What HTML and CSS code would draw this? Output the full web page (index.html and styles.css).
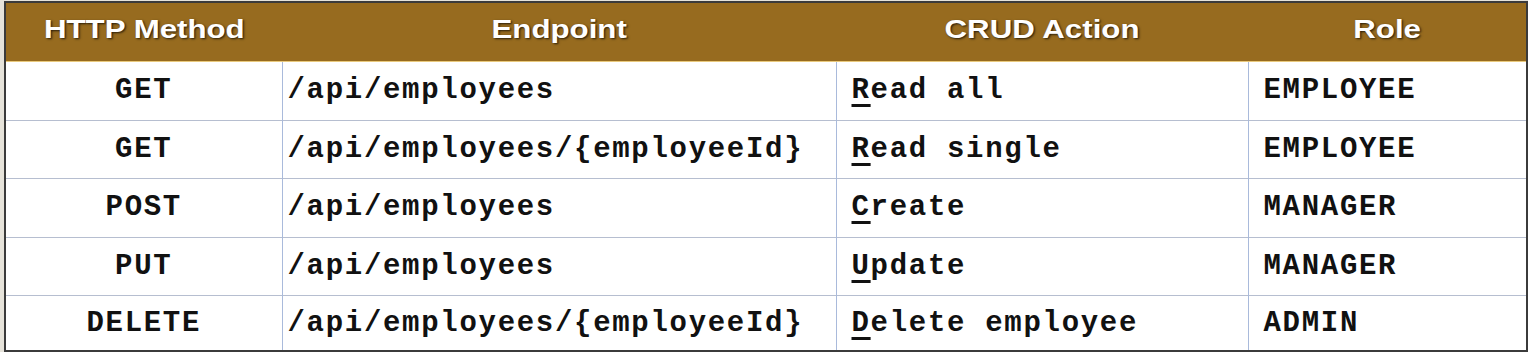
FILE: index.html
```html
<!DOCTYPE html>
<html lang="en">
<head>
    <meta charset="UTF-8">
    <title>Employee REST Endpoints</title>
    <link rel="stylesheet" href="styles.css">
</head>
<body>
    <div class="sheet">
        <table class="endpoints">
            <colgroup>
                <col class="col-method">
                <col class="col-path">
                <col class="col-action">
                <col class="col-role">
            </colgroup>
            <thead>
                <tr>
                    <th><span class="head-label">HTTP Method</span></th>
                    <th><span class="head-label">Endpoint</span></th>
                    <th><span class="head-label">CRUD Action</span></th>
                    <th><span class="head-label">Role</span></th>
                </tr>
            </thead>
            <tbody>
                <tr>
                    <td class="method">GET</td>
                    <td class="path">/api/employees</td>
                    <td class="action"><u>R</u>ead all</td>
                    <td class="role">EMPLOYEE</td>
                </tr>
                <tr>
                    <td class="method">GET</td>
                    <td class="path">/api/employees/{employeeId}</td>
                    <td class="action"><u>R</u>ead single</td>
                    <td class="role">EMPLOYEE</td>
                </tr>
                <tr>
                    <td class="method">POST</td>
                    <td class="path">/api/employees</td>
                    <td class="action"><u>C</u>reate</td>
                    <td class="role">MANAGER</td>
                </tr>
                <tr>
                    <td class="method">PUT</td>
                    <td class="path">/api/employees</td>
                    <td class="action"><u>U</u>pdate</td>
                    <td class="role">MANAGER</td>
                </tr>
                <tr>
                    <td class="method">DELETE</td>
                    <td class="path">/api/employees/{employeeId}</td>
                    <td class="action"><u>D</u>elete employee</td>
                    <td class="role">ADMIN</td>
                </tr>
            </tbody>
        </table>
    </div>
</body>
</html>
```

FILE: styles.css
```css
body {
    margin: 0;
    padding: 1px 0 0 4px;
    background-color: #e6e3da;
}

.sheet {
    border: 2px solid #3b3b3b;
    background-color: #ffffff;
    height: 347px;
    overflow: hidden;
}

.endpoints {
    width: 100%;
    border-collapse: collapse;
    table-layout: fixed;
}

.col-method { width: 276px; }
.col-path { width: 554px; }
.col-action { width: 412px; }
.col-role { width: 278px; }

th {
    height: 52px;
    padding: 0 0 6px 0;
    background-color: #976b1f;
    border-bottom: 1px solid #e9c97c;
    color: #ffffff;
    font-family: "Liberation Sans", Arial, sans-serif;
    font-weight: bold;
    font-size: 25px;
    text-align: center;
    text-shadow: 1px 1px 2px rgba(0, 0, 0, 0.75);
}

.head-label {
    display: inline-block;
    transform: scaleX(1.25);
}

td {
    height: 57.5px;
    padding: 0;
    border-top: 1px solid #b6bed0;
    border-left: 1px solid #a9badb;
    font-family: "Liberation Mono", "Courier New", monospace;
    font-weight: bold;
    font-size: 29px;
    letter-spacing: 1.7px;
    color: #111111;
}

tbody tr:first-child td {
    border-top: none;
}

tbody tr:last-child td {
    height: 54px;
}

td:first-child {
    border-left: none;
}

.method {
    text-align: center;
}

.path {
    padding-left: 5px;
}

.action {
    padding-left: 15px;
}

.role {
    padding-left: 15px;
}

.action u {
    text-decoration-thickness: 3px;
    text-underline-offset: 6px;
}
```
